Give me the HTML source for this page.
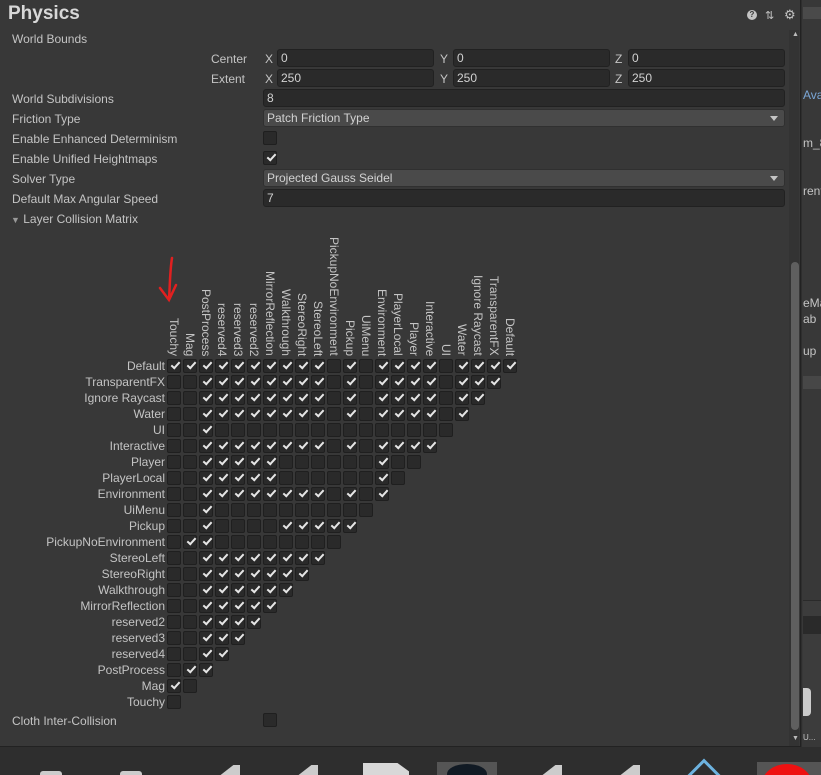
<!DOCTYPE html>
<html style="overflow:hidden;width:821px;height:775px"><head><meta charset="utf-8"><style>
*{margin:0;padding:0;box-sizing:border-box}
body{width:821px;height:775px;background:#2e2e2e;overflow:hidden;position:relative;font-family:"Liberation Sans",sans-serif;font-size:12px;color:#c4c4c4}
.abs{position:absolute}
#panel{position:absolute;left:0;top:0;width:801px;height:747px;background:#383838;border-right:1px solid #222;border-bottom:1px solid #222}
.lbl{position:absolute;left:12px;white-space:nowrap;line-height:14px}
.fld{position:absolute;height:18px;background:#2a2a2a;border:1px solid #212121;border-radius:3px;padding-left:3px;line-height:16px;color:#d2d2d2}
.dd{background:#4a4a4a;border-color:#303030}
.dd:after{content:"";position:absolute;right:6px;top:6px;border-left:4px solid transparent;border-right:4px solid transparent;border-top:5px solid #c4c4c4}
.cb{position:absolute;width:14px;height:14px;background:#2a2a2a;border:1px solid #1f1f1f;border-radius:2px}
.ck:after{content:"";position:absolute;left:3px;top:2px;width:7px;height:3px;border-left:2px solid #e6e6e6;border-bottom:2px solid #e6e6e6;transform:rotate(-48deg)}
.rl{position:absolute;right:635px;text-align:right;white-space:nowrap;line-height:14px}
.cl{position:absolute;bottom:0;width:14px;writing-mode:vertical-rl;line-height:14px;white-space:nowrap;font-size:12px}
#bot{position:absolute;left:0;top:747px;width:821px;height:28px;overflow:hidden}
</style></head><body>
<div id="panel">
<div class="abs" style="left:8px;top:3px;font-size:19px;font-weight:bold;color:#d8d8d8">Physics</div>
<div class="abs" style="left:747px;top:10px;width:10px;height:10px;border-radius:50%;background:#c4c4c4;font-size:8px;color:#383838;text-align:center;line-height:10px;font-weight:bold">?</div>
<div class="abs" style="left:765px;top:9px;color:#c4c4c4;font-size:11px">⇅</div>
<div class="abs" style="left:784px;top:7px;color:#c4c4c4;font-size:13px">⚙</div>
<div class="lbl" style="top:32px">World Bounds</div>
<div class="abs" style="left:211px;top:52px">Center</div>
<div class="abs" style="left:211px;top:72px">Extent</div>
<div class="abs" style="left:265px;top:52px">X</div><div class="fld" style="left:277px;top:49px;width:157px">0</div>
<div class="abs" style="left:440px;top:52px">Y</div><div class="fld" style="left:453px;top:49px;width:157px">0</div>
<div class="abs" style="left:615px;top:52px">Z</div><div class="fld" style="left:628px;top:49px;width:157px">0</div>
<div class="abs" style="left:265px;top:72px">X</div><div class="fld" style="left:277px;top:69px;width:157px">250</div>
<div class="abs" style="left:440px;top:72px">Y</div><div class="fld" style="left:453px;top:69px;width:157px">250</div>
<div class="abs" style="left:615px;top:72px">Z</div><div class="fld" style="left:628px;top:69px;width:157px">250</div>
<div class="lbl" style="top:92px">World Subdivisions</div><div class="fld" style="left:263px;top:89px;width:522px">8</div>
<div class="lbl" style="top:112px">Friction Type</div><div class="fld dd" style="left:263px;top:109px;width:522px">Patch Friction Type</div>
<div class="lbl" style="top:132px">Enable Enhanced Determinism</div><div class="cb" style="left:263px;top:131px"></div>
<div class="lbl" style="top:152px">Enable Unified Heightmaps</div><div class="cb ck" style="left:263px;top:151px"></div>
<div class="lbl" style="top:172px">Solver Type</div><div class="fld dd" style="left:263px;top:169px;width:522px">Projected Gauss Seidel</div>
<div class="lbl" style="top:192px">Default Max Angular Speed</div><div class="fld" style="left:263px;top:189px;width:522px">7</div>
<div class="lbl" style="top:212px;left:11px"><span style="font-size:9px;color:#999">▼</span> Layer Collision Matrix</div>
<div id="cols" class="abs" style="left:0;top:0;width:600px;height:356px">
<div class="cl" style="left:167px">Touchy</div><div class="cl" style="left:183px">Mag</div><div class="cl" style="left:199px">PostProcess</div><div class="cl" style="left:215px">reserved4</div><div class="cl" style="left:231px">reserved3</div><div class="cl" style="left:247px">reserved2</div><div class="cl" style="left:263px">MirrorReflection</div><div class="cl" style="left:279px">Walkthrough</div><div class="cl" style="left:295px">StereoRight</div><div class="cl" style="left:311px">StereoLeft</div><div class="cl" style="left:327px">PickupNoEnvironment</div><div class="cl" style="left:343px">Pickup</div><div class="cl" style="left:359px">UiMenu</div><div class="cl" style="left:375px">Environment</div><div class="cl" style="left:391px">PlayerLocal</div><div class="cl" style="left:407px">Player</div><div class="cl" style="left:423px">Interactive</div><div class="cl" style="left:439px">UI</div><div class="cl" style="left:455px">Water</div><div class="cl" style="left:471px">Ignore Raycast</div><div class="cl" style="left:487px">TransparentFX</div><div class="cl" style="left:503px">Default</div>
</div>
<div class="rl" style="top:359px">Default</div><div class="rl" style="top:375px">TransparentFX</div><div class="rl" style="top:391px">Ignore Raycast</div><div class="rl" style="top:407px">Water</div><div class="rl" style="top:423px">UI</div><div class="rl" style="top:439px">Interactive</div><div class="rl" style="top:455px">Player</div><div class="rl" style="top:471px">PlayerLocal</div><div class="rl" style="top:487px">Environment</div><div class="rl" style="top:503px">UiMenu</div><div class="rl" style="top:519px">Pickup</div><div class="rl" style="top:535px">PickupNoEnvironment</div><div class="rl" style="top:551px">StereoLeft</div><div class="rl" style="top:567px">StereoRight</div><div class="rl" style="top:583px">Walkthrough</div><div class="rl" style="top:599px">MirrorReflection</div><div class="rl" style="top:615px">reserved2</div><div class="rl" style="top:631px">reserved3</div><div class="rl" style="top:647px">reserved4</div><div class="rl" style="top:663px">PostProcess</div><div class="rl" style="top:679px">Mag</div><div class="rl" style="top:695px">Touchy</div>
<div id="grid"></div>
<div class="lbl" style="top:714px">Cloth Inter-Collision</div><div class="cb" style="left:263px;top:713px"></div>
<svg class="abs" style="left:150px;top:255px" width="40" height="50"><path d="M22 3 C20 15 20 28 19 45 M10 33 L19 45 L26 30" stroke="#e02020" stroke-width="2.5" fill="none" stroke-linecap="round"/></svg>
<div class="abs" style="left:789px;top:30px;width:10px;height:716px;background:#333"></div>
<div class="abs" style="left:792px;top:31px;font-size:7px;color:#bbb">▲</div>
<div class="abs" style="left:791px;top:262px;width:8px;height:468px;background:#5f5f5f;border-radius:4px"></div>
<div class="abs" style="left:792px;top:735px;font-size:7px;color:#bbb">▼</div>
</div>
<div class="abs" style="left:802px;top:0;width:19px;height:747px;background:#383838"></div>
<div class="abs" style="left:803px;top:7px;width:18px;height:12px;background:#4a4a4a"></div>
<div class="abs" style="left:803px;top:88px;color:#7aa6d6">Avat</div>
<div class="abs" style="left:803px;top:136px">m_8</div>
<div class="abs" style="left:803px;top:184px">rent</div>
<div class="abs" style="left:803px;top:296px">eMa</div>
<div class="abs" style="left:803px;top:312px">ab</div>
<div class="abs" style="left:803px;top:344px">up</div>
<div class="abs" style="left:803px;top:376px;width:18px;height:13px;background:#474747"></div>
<div class="abs" style="left:803px;top:600px;width:18px;height:140px;background:#3c3c3c;border-top:1px solid #2a2a2a"></div>
<div class="abs" style="left:803px;top:616px;width:18px;height:18px;background:#2a2a2a"></div>
<div class="abs" style="left:803px;top:688px;width:8px;height:28px;background:#ccc;border-radius:0 4px 4px 0"></div>
<div class="abs" style="left:803px;top:733px;font-size:8px">U...</div>
<div id="bot">
<div class="abs" style="left:40px;top:24px;width:22px;height:6px;background:#ccc;border-radius:3px 3px 0 0"></div>
<div class="abs" style="left:120px;top:24px;width:22px;height:6px;background:#ccc;border-radius:3px 3px 0 0"></div>
<div class="abs" style="left:218px;top:18px;width:22px;height:12px;background:#ccc;clip-path:polygon(70% 0,100% 0,100% 100%,0 100%)"></div>
<div class="abs" style="left:296px;top:18px;width:22px;height:12px;background:#ccc;clip-path:polygon(70% 0,100% 0,100% 100%,0 100%)"></div>
<div class="abs" style="left:363px;top:16px;width:46px;height:14px;background:#d8d8d8;clip-path:polygon(0 0,75% 0,100% 60%,100% 100%,0 100%)"></div>
<div class="abs" style="left:437px;top:15px;width:60px;height:13px;background:#555"></div>
<div class="abs" style="left:447px;top:17px;width:40px;height:20px;background:#111a24;border-radius:50%"></div>
<div class="abs" style="left:540px;top:18px;width:22px;height:12px;background:#ccc;clip-path:polygon(70% 0,100% 0,100% 100%,0 100%)"></div>
<div class="abs" style="left:618px;top:18px;width:22px;height:12px;background:#ccc;clip-path:polygon(70% 0,100% 0,100% 100%,0 100%)"></div>
<div class="abs" style="left:686px;top:19px;width:36px;height:36px;border:3px solid #6db3e0;transform:rotate(45deg)"></div>
<div class="abs" style="left:757px;top:15px;width:64px;height:13px;background:#555"></div>
<div class="abs" style="left:762px;top:17px;width:50px;height:40px;background:#e11;border-radius:50%"></div>
</div>
<script>
var rows=[
"1111111111010111101111","001111111101011110111","00111111110101111011","0011111111010111101",
"001000000000000000","00111111110101111","0011111000000100","001111100000010",
"00111111110101","0010000000000","001000011111","01100000000",
"0011111111","001111111","00111111","0011111","001111","00111","0011","011","10","0"];
var h="";
rows.forEach(function(r,i){for(var j=0;j<r.length;j++){h+='<div class="cb'+(r[j]=="1"?" ck":"")+'" style="left:'+(167+16*j)+'px;top:'+(359+16*i)+'px"></div>';}});
document.getElementById("grid").innerHTML=h;
</script>
</body></html>
